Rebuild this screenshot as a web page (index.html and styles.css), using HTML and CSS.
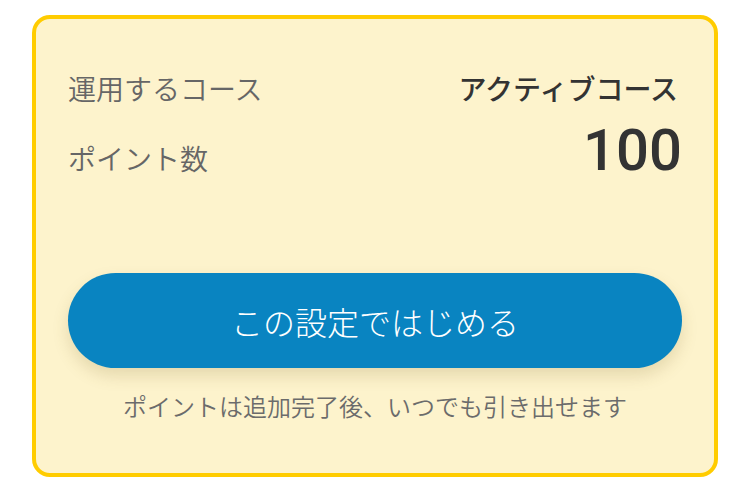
FILE: index.html
```html
<!DOCTYPE html>
<html lang="ja">
<head>
    <meta charset="UTF-8">
    <meta name="viewport" content="width=device-width, initial-scale=1.0">
    <title>コース設定</title>
    <link rel="stylesheet" href="styles.css">
</head>
<body>
    <div class="card">
        <div class="row">
            <span class="label">運用するコース</span>
            <span class="course">アクティブコース</span>
        </div>
        <div class="row row-points">
            <span class="label">ポイント数</span>
            <span class="points">100</span>
        </div>
        <button class="start-btn">この設定ではじめる</button>
        <p class="note">ポイントは追加完了後、いつでも引き出せます</p>
    </div>
</body>
</html>
```

FILE: styles.css
```css
body {
    margin: 0;
    padding: 15px 32px;
    background: #ffffff;
    font-family: 'Noto Sans CJK JP', 'Noto Sans', sans-serif;
}
.card {
    background: #fdf3cc;
    border: 4px solid #ffcc00;
    border-radius: 18px;
    padding: 48px 32px 49px;
}
.row {
    display: flex;
    justify-content: space-between;
    align-items: baseline;
}
.label {
    font-size: 28px;
    line-height: 42px;
    color: #666666;
    font-weight: 350;
}
.course {
    font-size: 28px;
    line-height: 42px;
    font-weight: 500;
    color: #333333;
    margin-right: 4px;
}
.row-points {
    margin-top: 12px;
}
.points {
    font-family: 'Roboto', 'Noto Sans', sans-serif;
    font-size: 58px;
    line-height: 58px;
    font-weight: 500;
    color: #333333;
}
.start-btn {
    display: block;
    width: 100%;
    height: 95px;
    margin-top: 94px;
    border: none;
    border-radius: 48px;
    background: #0984c1;
    color: #ffffff;
    font-family: 'Noto Sans CJK JP', sans-serif;
    font-size: 32px;
    font-weight: 300;
    box-shadow: 0 8px 16px rgba(120, 100, 40, 0.18);
    cursor: pointer;
}
.note {
    margin: 20px 0 0;
    font-size: 24px;
    line-height: 36px;
    color: #6b6b6b;
    font-weight: 350;
    text-align: center;
}
```
